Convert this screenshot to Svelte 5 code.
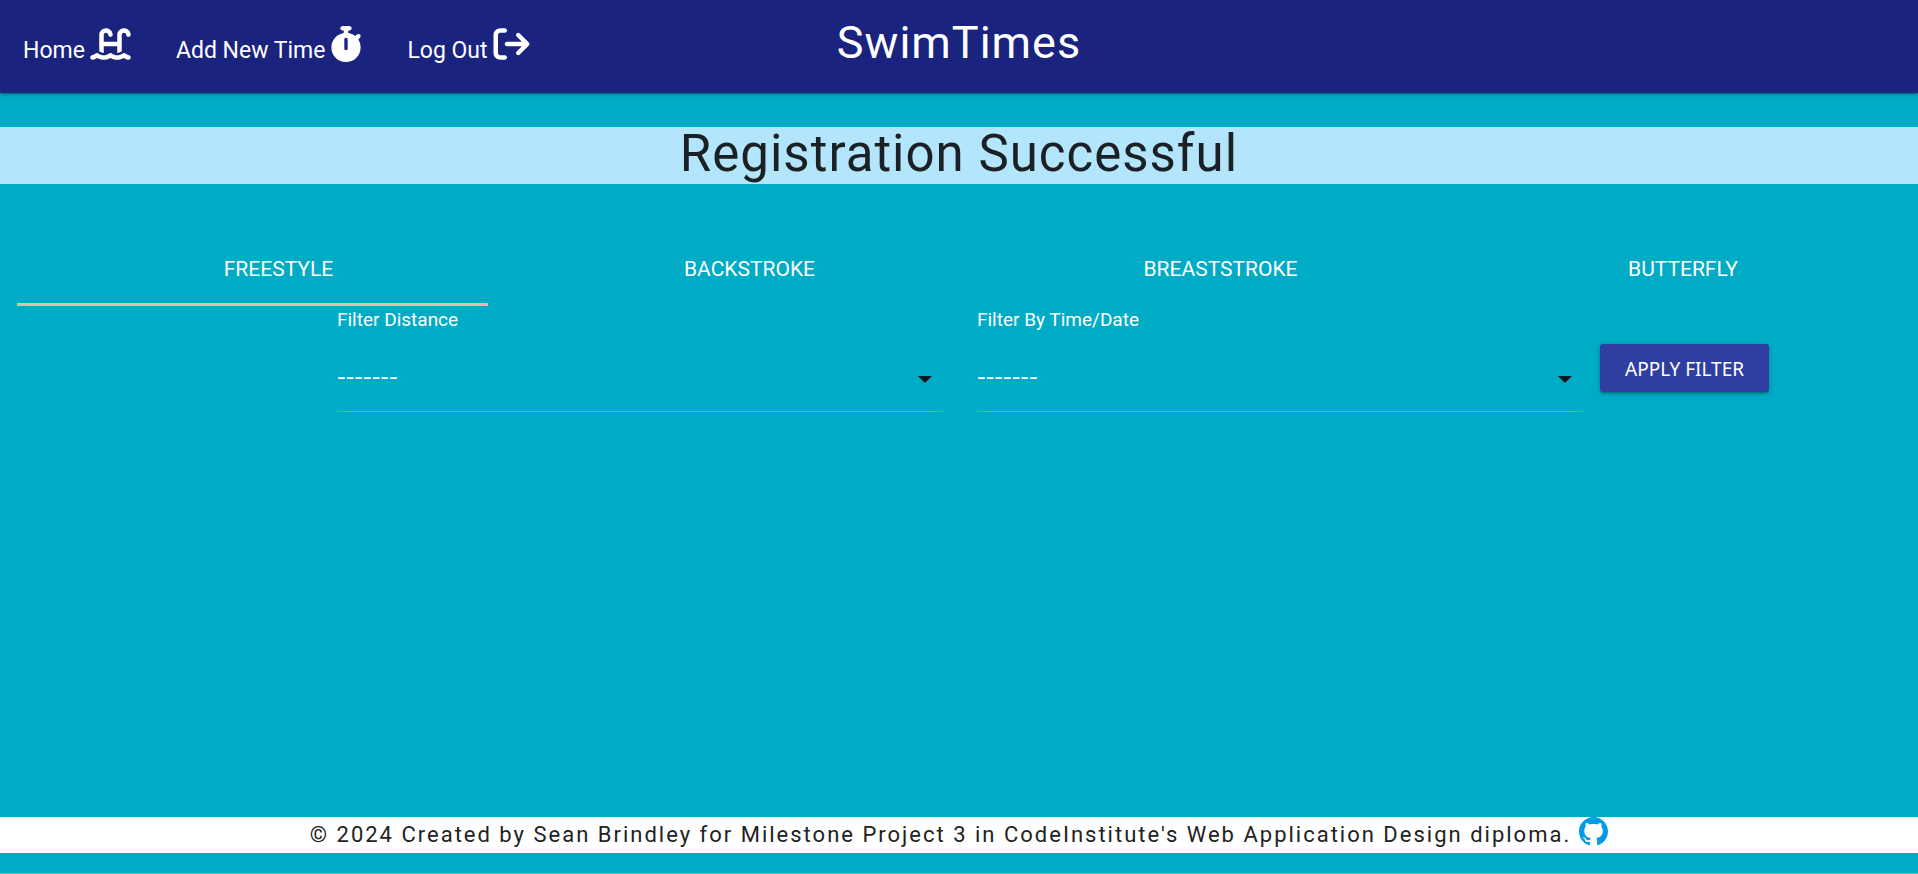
<script>
  const tabs = ['Freestyle', 'Backstroke', 'Breaststroke', 'Butterfly'];
  let active = $state(0);
  const filters = [
    { id: 'distance', label: 'Filter Distance', options: ['-------'] },
    { id: 'order', label: 'Filter By Time/Date', options: ['-------'] }
  ];
</script>

<div class="page">
  <header>
    <nav aria-label="Main">
      <a href="#home">Home
        <svg class="wide" viewBox="0 0 576 512" aria-hidden="true"><path d="M128 127.7C128 74.900 170.900 32 223.700 32c48.300 0 89.400 36 95.600 83.900l.400 3c2.200 17.500-10.200 33.500-27.700 35.700s-33.500-10.200-35.700-27.700l-.400-3c-2.100-16-15.700-28-31.800-28C206.100 96 192 110.100 192 127.700V224H384V127.700C384 74.900 426.900 32 479.700 32c48.300 0 89.400 36 95.600 83.900l.4 3c2.200 17.500-10.200 33.500-27.700 35.700s-33.500-10.200-35.700-27.700l-.4-3c-2.100-16-15.700-28-31.800-28C462.100 96 448 110.100 448 127.700V361c-1.600 1-3.300 2-4.800 3.100c-18 12.400-40.100 20.300-59.200 20.300V288H192v96.500c-19 0-41.200-7.900-59.100-20.300c-1.600-1.100-3.200-2.200-4.900-3.100V127.700zM306.500 389.900C329 405.400 356.500 416 384 416c26.900 0 55.400-10.800 77.400-26.100c11.900-8.500 28.100-7.800 39.200 1.700c14.400 11.900 32.500 21 50.600 25.200c17.200 4 27.900 21.200 23.900 38.400s-21.200 27.900-38.400 23.900c-24.500-5.700-44.900-16.500-58.200-25C449.500 469.700 417 480 384 480c-31.900 0-60.600-9.900-80.400-18.900c-5.800-2.700-11.100-5.300-15.600-7.700c-4.500 2.400-9.700 5.100-15.600 7.700c-19.800 9-48.500 18.900-80.400 18.900c-33 0-65.500-10.300-94.500-25.800c-13.400 8.400-33.700 19.300-58.200 25c-17.200 4-34.400-6.700-38.400-23.900s6.700-34.400 23.900-38.400c18.100-4.200 36.200-13.300 50.600-25.200c11.100-9.400 27.300-10.100 39.200-1.700C136.700 405.200 165.100 416 192 416c27.500 0 55-10.600 77.500-26.100c11.100-7.900 25.900-7.900 37 0z"/></svg>
      </a>
      <a href="#add">Add New Time
        <svg class="watch" viewBox="0 0 448 512" aria-hidden="true"><path d="M176 0c-17.700 0-32 14.300-32 32s14.300 32 32 32h16V98.400C92.300 113.800 16 200 16 304c0 114.900 93.100 208 208 208s208-93.100 208-208c0-41.800-12.300-80.700-33.500-113.200l24.100-24.100c12.500-12.500 12.500-32.800 0-45.300s-32.800-12.500-45.300 0L355.700 143c-28.100-23-62.200-38.800-99.700-44.600V64h16c17.700 0 32-14.300 32-32s-14.300-32-32-32H176zm72 192V320c0 13.300-10.700 24-24 24s-24-10.700-24-24V192c0-13.300 10.700-24 24-24s24 10.700 24 24z"/></svg>
      </a>
      <a href="#logout">Log Out
        <svg class="exit" viewBox="0 0 512 512" aria-hidden="true"><path d="M502.600 278.600c12.500-12.500 12.500-32.800 0-45.300l-128-128c-12.500-12.500-32.800-12.500-45.300 0s-12.500 32.800 0 45.300L402.700 224H192c-17.700 0-32 14.300-32 32s14.300 32 32 32H402.700l-73.400 73.400c-12.500 12.500-12.500 32.800 0 45.300s32.800 12.500 45.300 0l128-128zM160 96c17.700 0 32-14.300 32-32s-14.300-32-32-32H96C43 32 0 75 0 128V384c0 53 43 96 96 96h64c17.700 0 32-14.300 32-32s-14.300-32-32-32H96c-17.700 0-32-14.300-32-32V128c0-17.700 14.300-32 32-32h64z"/></svg>
      </a>
    </nav>
    <a class="brand" href="#home">SwimTimes</a>
  </header>

  <main>
    <h1>Registration Successful</h1>

    <div class="tabs" role="tablist">
      {#each tabs as tab, i}
        <button type="button" role="tab" aria-selected={active === i} onclick={() => (active = i)}>{tab}</button>
      {/each}
    </div>

    <form onsubmit={(e) => e.preventDefault()}>
      {#each filters as f}
        <div class="field">
          <label for={f.id}>{f.label}</label>
          <div class="select">
            <select id={f.id}>
              {#each f.options as o}<option>{o}</option>{/each}
            </select>
            <svg viewBox="0 0 24 24" aria-hidden="true"><path d="M5 8h14l-7 7z"/></svg>
          </div>
        </div>
      {/each}
      <button class="apply" type="submit">Apply Filter</button>
    </form>
  </main>

  <footer>
    <p>© 2024 Created by Sean Brindley for Milestone Project 3 in CodeInstitute's Web Application Design diploma.</p>
    <a href="#github" aria-label="GitHub">
      <svg viewBox="0 0 16 16" aria-hidden="true"><path d="M8 0C3.580 0 0 3.580 0 8c0 3.540 2.290 6.530 5.470 7.590.4.070.55-.17.55-.38 0-.19-.01-.82-.01-1.490-2.010.37-2.530-.49-2.690-.94-.09-.23-.48-.94-.82-1.130-.28-.15-.68-.52-.01-.53.63-.01 1.080.58 1.230.82.72 1.210 1.870.87 2.330.66.07-.52.28-.87.51-1.070-1.780-.2-3.640-.89-3.640-3.950 0-.87.31-1.590.82-2.150-.08-.2-.36-1.020.08-2.120 0 0 .67-.21 2.200.82.64-.18 1.320-.27 2-.27s1.360.09 2 .27c1.530-1.040 2.200-.82 2.200-.82.44 1.100.16 1.920.08 2.120.51.56.82 1.270.82 2.150 0 3.070-1.870 3.750-3.650 3.950.29.25.54.73.54 1.480 0 1.070-.01 1.930-.01 2.200 0 .21.15.46.55.38A8.010 8.010 0 0 0 16 8c0-4.420-3.580-8-8-8z"/></svg>
    </a>
  </footer>
</div>

<style>
  :global(body) {
    margin: 0;
    background: #00acc5;
  }

  .page {
    display: flex;
    flex-direction: column;
    box-sizing: border-box;
    min-height: 100vh;
    padding-bottom: 20px;
    border-bottom: 1px solid #9ea8ac;
    background: #00acc5;
    color: #fff;
    font-family: "Roboto", sans-serif;
  }

  header {
    display: grid;
    grid-template-columns: 1fr auto 1fr;
    align-items: start;
    height: 93px;
    background: #1a237e;
    box-shadow: 0 2px 2px rgba(0, 0, 0, 0.14), 0 3px 1px -2px rgba(0, 0, 0, 0.12), 0 1px 5px rgba(0, 0, 0, 0.2);
  }

  nav {
    display: flex;
    gap: 45px;
    padding: 26px 0 0 23px;
  }

  a {
    color: inherit;
    text-decoration: none;
  }

  nav a {
    display: flex;
    align-items: flex-start;
    gap: 5px;
    font-size: 23px;
    line-height: 50px;
    white-space: nowrap;
  }

  nav svg {
    height: 36px;
    fill: #fff;
  }

  .wide { width: 41px; }
  .watch { width: 32px; }
  .exit { width: 37px; }

  .brand {
    font-size: 45px;
    line-height: 85px;
    letter-spacing: 1px;
  }

  main {
    flex: 1;
  }

  h1 {
    margin: 34px 0 59px;
    padding-bottom: 3px;
    background: #b3e5fc;
    color: #1a2023;
    font-size: 51px;
    font-weight: 400;
    line-height: 54px;
    letter-spacing: 1px;
    text-align: center;
  }

  .tabs {
    display: grid;
    grid-template-columns: repeat(3, 1fr) 454px;
    padding: 0 34px 0 17px;
  }

  button {
    border: 0;
    color: #fff;
    font-family: inherit;
    text-transform: uppercase;
    cursor: pointer;
  }

  .tabs button {
    height: 63px;
    padding: 0 0 8px 52px;
    border-bottom: 3px solid transparent;
    background: none;
    font-size: 21px;
  }

  .tabs button[aria-selected="true"] {
    border-bottom-color: #f6b2b5;
  }

  form {
    display: grid;
    grid-template-columns: 1fr 1fr 301px;
    column-gap: 34px;
    padding-left: 337px;
  }

  label {
    display: block;
    font-size: 19px;
    line-height: 28px;
  }

  .select {
    position: relative;
  }

  select {
    appearance: none;
    display: block;
    box-sizing: border-box;
    width: 100%;
    height: 78px;
    padding: 8px 0 0;
    border: 0;
    border-bottom: 1px solid #8f9da0;
    border-radius: 0;
    background: none;
    color: #fff;
    font: 24px "DejaVu Sans", sans-serif;
  }

  option {
    color: #222;
  }

  .select svg {
    position: absolute;
    top: 34px;
    right: 6px;
    width: 24px;
    height: 24px;
    fill: #06191c;
    pointer-events: none;
  }

  .apply {
    justify-self: start;
    height: 48px;
    margin: 38px 0 0 -17px;
    padding: 2px 25px 0;
    border-radius: 3px;
    background: #303f9f;
    font-family: "Noto Sans", sans-serif;
    font-size: 19px;
    box-shadow: 0 2px 2px rgba(0, 0, 0, 0.14), 0 3px 1px -2px rgba(0, 0, 0, 0.12), 0 1px 5px rgba(0, 0, 0, 0.2);
  }

  footer {
    display: flex;
    justify-content: center;
    gap: 8px;
    height: 36px;
    background: #fff;
    color: #222;
    font-size: 22px;
    line-height: 36px;
    letter-spacing: 2px;
  }

  footer p {
    margin: 0;
  }

  footer svg {
    display: block;
    width: 29px;
    height: 29px;
    fill: #039be5;
  }
</style>
